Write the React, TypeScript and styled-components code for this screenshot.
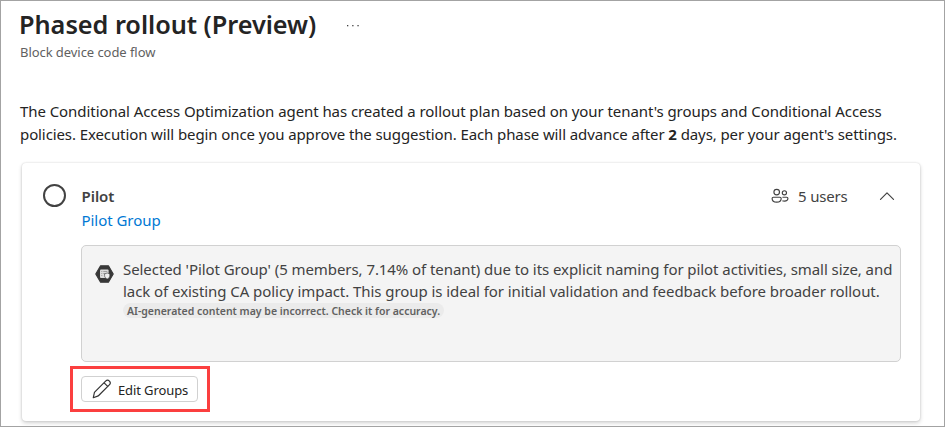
import React from "react";
import styled, { createGlobalStyle } from "styled-components";

const GlobalStyle = createGlobalStyle`
  * { box-sizing: border-box; }
  body {
    margin: 0;
    background: #fff;
    font-family: "Noto Sans", "Open Sans", sans-serif;
    color: #242424;
  }
`;

const Page = styled.main`
  height: 427px;
  overflow: hidden;
  border: 1px solid #a3a3a3;
  padding: 7px 24px 0 18px;
`;

const TitleRow = styled.div`
  display: flex;
  align-items: center;
  height: 32px;
`;

const Title = styled.h1`
  margin: 0;
  width: 327px;
  font-size: 25.3px;
  line-height: 32px;
  font-weight: 600;
  letter-spacing: -0.04px;
  white-space: nowrap;
`;

const Subtitle = styled.p`
  margin: 3px 0 0 1px;
  font-size: 13px;
  line-height: 18px;
  letter-spacing: -0.06px;
  color: #616161;
`;

const Intro = styled.div`
  margin: 39px 0 0 1px;
  font-size: 15px;
  line-height: 23px;
`;

const Line = styled.span<{ $spacing: number }>`
  display: block;
  white-space: nowrap;
  letter-spacing: ${(p) => p.$spacing}px;
`;

const Card = styled.section`
  margin: 17px 0 0 3px;
  width: 898px;
  height: 258px;
  padding: 20px 19px 0 20px;
  border-radius: 4px;
  background: #fff;
  box-shadow: 0 0 2px rgba(0, 0, 0, 0.16), 0 2px 4px rgba(0, 0, 0, 0.18);
`;

const CardHeader = styled.header`
  display: flex;
  height: 62px;
  color: #424242;
`;

const PhaseRing = styled.span`
  width: 23px;
  height: 23px;
  margin: 1px 15.5px 0 1px;
  border: 2px solid #424242;
  border-radius: 50%;
`;

const PhaseText = styled.div`
  flex: 1;
  padding-top: 1px;
  font-size: 15px;
  line-height: 24px;
  letter-spacing: -0.04px;
`;

const PhaseName = styled.div`
  font-weight: 600;
`;

const GroupLink = styled.a`
  color: #0078d4;
`;

const UserCount = styled.div`
  display: flex;
  align-items: center;
  height: 26px;
  gap: 9px;
  font-size: 15px;
  letter-spacing: -0.2px;
`;

const Toggle = styled.button`
  display: flex;
  align-items: center;
  justify-content: center;
  width: 16px;
  height: 26px;
  margin: 0 6px 0 31.5px;
  padding: 0;
  border: 0;
  background: none;
  color: #424242;
`;

const CardBody = styled.div`
  margin-left: 39px;
`;

const Reason = styled.div`
  display: flex;
  width: 820px;
  height: 117px;
  padding: 12px 0 0 13px;
  border: 1px solid #d1d1d1;
  border-radius: 5px;
  background: #f4f4f4;
  color: #424242;
`;

const AgentIcon = styled.svg`
  flex: none;
  margin: 7px 9px 0 0;
`;

const ReasonText = styled.div`
  font-size: 15px;
  line-height: 22px;
`;

const Disclaimer = styled.div`
  width: 321px;
  height: 15px;
  margin-top: 1px;
  padding-left: 4px;
  border-radius: 8px;
  background: #ebebeb;
  color: #616161;
  font-size: 10.5px;
  line-height: 16px;
  font-weight: 600;
  white-space: nowrap;
`;

const Highlight = styled.div`
  display: flex;
  width: 140px;
  height: 46px;
  margin: 4px 0 0 -11px;
  padding: 7px 8px;
  border: 3px solid #fb3f3f;
`;

const EditButton = styled.button`
  display: flex;
  align-items: center;
  gap: 6px;
  width: 117px;
  height: 26px;
  padding: 0 0 0 10px;
  border: 1px solid #d1d1d1;
  border-radius: 4px;
  background: #fff;
  color: #242424;
  font: 400 13px "Noto Sans", "Open Sans", sans-serif;
  letter-spacing: -0.11px;
  white-space: nowrap;
`;

const EditLabel = styled.span`
  padding-top: 2px;
`;

const MoreIcon = () => (
  <svg width="14" height="8" viewBox="0 0 14 8" fill="#424242">
    <rect x="1" y="5" width="1.3" height="1.3" />
    <rect x="6.2" y="5" width="1.3" height="1.3" />
    <rect x="11.4" y="5" width="1.3" height="1.3" />
  </svg>
);

const PeopleIcon = () => (
  <svg width="18" height="16" viewBox="0 0 18 16" fill="none" stroke="#424242" strokeWidth="1.15">
    <circle cx="5.7" cy="4.1" r="2.8" />
    <circle cx="13.4" cy="4.8" r="2.1" />
    <path d="M2.4 9.2h6.5c.8 0 1.3.5 1.3 1.2 0 2.2-1.8 3.7-4.5 3.7s-4.6-1.5-4.6-3.7c0-.7.5-1.2 1.3-1.2z" />
    <path d="M11.4 9.2h4.3c.8 0 1.2.5 1.2 1.1 0 1.8-1.4 2.8-3.5 2.8-.8 0-1.5-.1-2-.4" />
  </svg>
);

const ChevronUp = () => (
  <svg width="16" height="10" viewBox="0 0 16 10" fill="none" stroke="#424242" strokeWidth="1.2">
    <path d="M1.5 8.3 8 1.8l6.5 6.5" strokeLinecap="round" strokeLinejoin="round" />
  </svg>
);

const PencilIcon = () => (
  <svg width="20" height="20" viewBox="0 0 20 20" fill="none" stroke="#333" strokeWidth="1.2" strokeLinejoin="round">
    <path d="M13.6 2.2c1.1-1.1 2.8-1.1 3.8-.1s1 2.7-.1 3.8L6.7 16.5c-.3.3-.7.5-1.1.6L1.3 18.7l1-4.7c.1-.4.3-.8.6-1.1z" />
    <path d="m12.1 3.8 3.9 3.9" />
  </svg>
);

export default function App() {
  return (
    <>
      <GlobalStyle />
      <Page>
        <TitleRow>
          <Title>Phased rollout (Preview)</Title>
          <MoreIcon />
        </TitleRow>
        <Subtitle>Block device code flow</Subtitle>
        <Intro>
          <Line $spacing={-0.067}>
            The Conditional Access Optimization agent has created a rollout plan based on your tenant's groups and Conditional Access
          </Line>
          <Line $spacing={-0.1}>
            policies. Execution will begin once you approve the suggestion. Each phase will advance after <b>2</b> days, per your agent's settings.
          </Line>
        </Intro>
        <Card>
          <CardHeader>
            <PhaseRing />
            <PhaseText>
              <PhaseName>Pilot</PhaseName>
              <GroupLink>Pilot Group</GroupLink>
            </PhaseText>
            <UserCount>
              <PeopleIcon />
              5 users
            </UserCount>
            <Toggle aria-label="Collapse">
              <ChevronUp />
            </Toggle>
          </CardHeader>
          <CardBody>
            <Reason>
              <AgentIcon width="19" height="18" viewBox="0 0 19 18">
                <path d="M5.6.8h7.800L18.2 9l-4.800 8.200H5.600L.8 9z" fill="#383838" stroke="#383838" strokeWidth="1.2" strokeLinejoin="round" />
                <rect x="5" y="4.5" width="8.6" height="8.5" rx="1" fill="#dcdcdc" />
                <path d="M6.300 6.500h1M8.300 6.500h4M6.300 8.500h1M8.300 8.500h2M6.300 10.500h1" stroke="#777" strokeWidth=".6" />
                <path d="m12.2 8 2.600.9v1.800c0 1.600-1.100 2.700-2.600 3.300-1.500-.6-2.600-1.700-2.600-3.300V8.900z" fill="#eee" stroke="#383838" strokeWidth=".6" />
              </AgentIcon>
              <ReasonText>
                <Line $spacing={-0.069}>
                  Selected 'Pilot Group' (5 members, 7.14% of tenant) due to its explicit naming for pilot activities, small size, and
                </Line>
                <Line $spacing={-0.062}>
                  lack of existing CA policy impact. This group is ideal for initial validation and feedback before broader rollout.
                </Line>
                <Disclaimer>AI-generated content may be incorrect. Check it for accuracy.</Disclaimer>
              </ReasonText>
            </Reason>
            <Highlight>
              <EditButton>
                <PencilIcon />
                <EditLabel>Edit Groups</EditLabel>
              </EditButton>
            </Highlight>
          </CardBody>
        </Card>
      </Page>
    </>
  );
}
